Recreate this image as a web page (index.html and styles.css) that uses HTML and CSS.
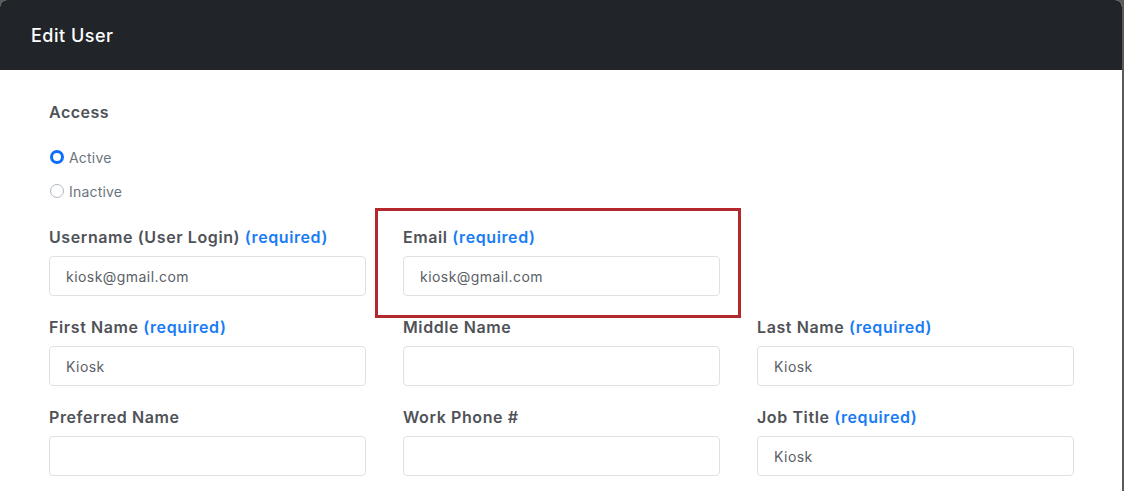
FILE: index.html
```html
<!DOCTYPE html>
<html lang="en">
<head>
    <meta charset="UTF-8">
    <meta name="viewport" content="width=device-width, initial-scale=1.0">
    <title>Edit User</title>
    <link rel="stylesheet" href="styles.css">
</head>
<body>
    <div class="modal">
        <header class="modal-header">
            <h1>Edit User</h1>
        </header>
        <form class="modal-body">
            <div class="access">
                <h2>Access</h2>
                <label class="radio"><input type="radio" name="access" checked> <span>Active</span></label>
                <label class="radio"><input type="radio" name="access"> <span>Inactive</span></label>
            </div>
            <div class="fields">
                <div class="field">
                    <label>Username (User Login) <em>(required)</em></label>
                    <input type="text" value="kiosk@gmail.com">
                </div>
                <div class="field highlighted">
                    <label>Email <em>(required)</em></label>
                    <input type="text" value="kiosk@gmail.com">
                </div>
                <div class="field empty"></div>

                <div class="field">
                    <label>First Name <em>(required)</em></label>
                    <input type="text" value="Kiosk">
                </div>
                <div class="field">
                    <label>Middle Name</label>
                    <input type="text" value="">
                </div>
                <div class="field">
                    <label>Last Name <em>(required)</em></label>
                    <input type="text" value="Kiosk">
                </div>

                <div class="field">
                    <label>Preferred Name</label>
                    <input type="text" value="">
                </div>
                <div class="field">
                    <label>Work Phone #</label>
                    <input type="text" value="">
                </div>
                <div class="field">
                    <label>Job Title <em>(required)</em></label>
                    <input type="text" value="Kiosk">
                </div>
            </div>
        </form>
    </div>
</body>
</html>
```

FILE: styles.css
```css
body {
    margin: 0;
    padding: 0;
    background-color: #5a5b5d;
    font-family: Inter, "Open Sans", Arial, sans-serif;
    color: #495057;
    overflow: hidden;
}
.modal {
    width: 1122px;
    height: 491px;
    background-color: white;
    border-radius: 7px 7px 0 0;
    overflow: hidden;
}
.modal-header {
    background-color: #212529;
    height: 70px;
    display: flex;
    align-items: center;
    padding: 0 31px;
}
.modal-header h1 {
    margin: 0;
    font-size: 18px;
    font-weight: 500;
    letter-spacing: 0.5px;
    color: white;
}
.modal-body {
    padding: 30px 49px 0;
}
.access h2 {
    margin: 0 0 22px;
    font-size: 16px;
    font-weight: 600;
    line-height: 24px;
    letter-spacing: 0.5px;
    color: #4f5257;
}
.radio {
    display: flex;
    align-items: center;
    gap: 5px;
    height: 22px;
    margin-bottom: 12px;
    font-size: 14px;
    letter-spacing: 0.2px;
    color: #6c757d;
}
.radio input {
    appearance: none;
    margin: 0 0 0 1px;
    width: 14px;
    height: 14px;
    border: 1.5px solid #b0b8c0;
    border-radius: 50%;
    box-sizing: border-box;
}
.radio input:checked {
    border: 3.5px solid #0d6efd;
}
.fields {
    display: grid;
    grid-template-columns: repeat(3, 317px);
    column-gap: 37px;
    margin-top: 24px;
}
.field {
    position: relative;
    margin-bottom: 20px;
}
.field label {
    display: block;
    height: 22px;
    line-height: 22px;
    margin-bottom: 8px;
    font-size: 16px;
    font-weight: 600;
    letter-spacing: 0.6px;
    color: #4f5257;
}
.field em {
    font-style: normal;
    color: #1a7cf5;
}
.field input {
    display: block;
    width: 100%;
    height: 40px;
    box-sizing: border-box;
    padding: 0 16px;
    border: 1px solid #dee2e6;
    border-radius: 4px;
    font-family: inherit;
    font-size: 14px;
    letter-spacing: 0.45px;
    color: #5a6066;
}
/* red annotation box round the email field */
.highlighted::before {
    content: "";
    position: absolute;
    left: -28px;
    right: -21px;
    top: -18px;
    bottom: -22px;
    border: 3px solid #b3282d;
}
```
